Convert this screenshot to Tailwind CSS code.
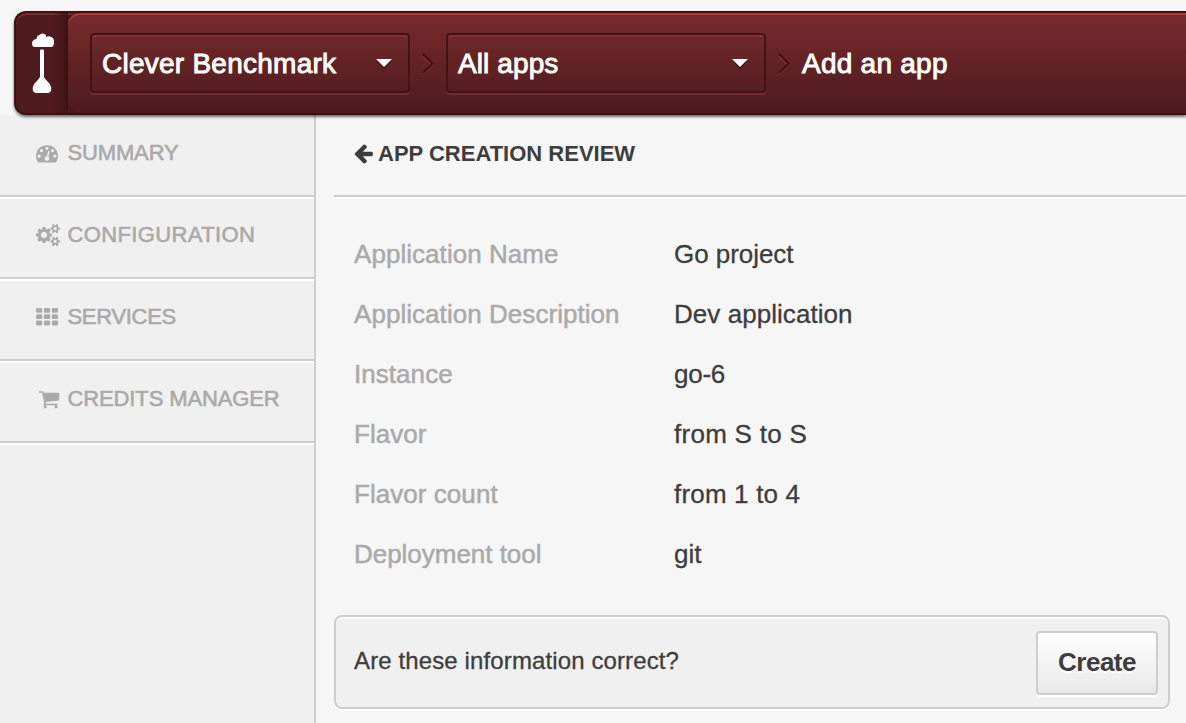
<!DOCTYPE html>
<html lang="en">
<head>
<meta charset="utf-8">
<title>App creation review</title>
<script src="https://cdn.jsdelivr.net/npm/@tailwindcss/browser@4"></script>
</head>
<body class="h-[723px] overflow-hidden bg-[#f6f6f6] font-['Liberation_Sans',Arial,sans-serif] text-[#3d3d3d]">
<div class="flex h-full flex-col">
  <div class="relative z-10 h-[115px] shrink-0 pt-[11px] pl-[14px]">
    <header class="flex h-[104px] rounded-l-[12px] border-y-2 border-l-2 border-[#3d1012] bg-[#501b1f] shadow-[inset_0_2px_0_#7d2a2e,0_2px_3px_rgba(0,0,0,0.55)]">
      <div class="flex w-[52px] shrink-0 justify-center rounded-l-[10px] bg-linear-to-r from-transparent from-70% to-[#3f1216] pt-5 pl-[2px]">
        <svg class="h-[60px] w-[22px]" viewBox="0 0 22 60" fill="#fff">
          <path d="M3 14Q0 14 0 10.500Q0 6.500 4.500 6Q4.500 2.500 7.500 2Q9 0 11.500 0.500Q14 1 14.500 4Q17 2.500 19 4Q22 4.500 22 9Q22 14 19 14Z"/>
          <path d="M8 17.500Q8 16.500 9 16.500H11Q12 16.500 12 17.500V44Q13 46 15.500 48.500Q19.500 52 19.300 56Q19 60 15.500 60H4.500Q1 60 .7 56Q.5 52 4.500 48.500Q7 46 8 44Z"/>
        </svg>
      </div>
      <div class="flex h-full grow items-start rounded-l-[12px] bg-linear-to-b from-[#782b2b] to-[#4d1a1f] pt-5 pl-[22px] text-[28px] tracking-[0.25px] text-white shadow-[inset_0_2px_0_#ab3a3a,-1px_0_3px_#3a1013]">
        <div class="flex h-[60px] w-[320px] shrink-0 items-center justify-between rounded-[4px] border-2 border-[#421316] pr-4 pl-[10px] shadow-[inset_0_2px_0_#8a2f32,0_2px_0_#792a2e]">
          <span class="pt-[2px] [-webkit-text-stroke:0.9px_white]">Clever Benchmark</span>
          <svg class="mt-[2px] h-[10px] w-4" viewBox="0 0 16 10"><path d="M0 1H16L8 10Z" fill="#3b1013"/><path d="M0 0H16L8 8Z" fill="#fff"/></svg>
        </div>
        <svg class="mx-3 mt-5 h-[22px] w-3 shrink-0" viewBox="0 0 12 22" fill="none"><path d="M1 3L10 12L1 21" stroke="#852d30" stroke-width="2"/><path d="M1 1L10.500 10.500L1 20" stroke="#3f1215" stroke-width="2.200"/></svg>
        <div class="flex h-[60px] w-[320px] shrink-0 items-center justify-between rounded-[4px] border-2 border-[#421316] pr-4 pl-[10px] shadow-[inset_0_2px_0_#8a2f32,0_2px_0_#792a2e]">
          <span class="pt-[2px] tracking-[0.1px] [-webkit-text-stroke:0.9px_white]">All apps</span>
          <svg class="mt-[2px] h-[10px] w-4" viewBox="0 0 16 10"><path d="M0 1H16L8 10Z" fill="#3b1013"/><path d="M0 0H16L8 8Z" fill="#fff"/></svg>
        </div>
        <svg class="mx-3 mt-5 h-[22px] w-3 shrink-0" viewBox="0 0 12 22" fill="none"><path d="M1 3L10 12L1 21" stroke="#852d30" stroke-width="2"/><path d="M1 1L10.500 10.500L1 20" stroke="#3f1215" stroke-width="2.200"/></svg>
        <span class="pt-px leading-[60px] [-webkit-text-stroke:0.9px_white]">Add an app</span>
      </div>
    </header>
  </div>

  <div class="flex min-h-0 grow">
    <nav class="w-[316px] shrink-0 border-r-2 border-[#cecece] bg-[#f0f0f0] text-[22px] text-[#aaa] [-webkit-text-stroke:0.6px_#aaa]">
      <a class="flex h-[82px] items-center border-b-2 border-[#cecece] pb-[5px] pl-9">
        <svg class="mr-[9.500px] h-[22px] w-[22px]" viewBox="0 0 1792 1792" fill="#aaa" stroke="none"><path d="M384 1152q0-53-37.500-90.500t-90.500-37.500-90.500 37.500-37.500 90.500 37.500 90.500 90.500 37.500 90.500-37.500 37.500-90.500zm192-448q0-53-37.500-90.500t-90.500-37.500-90.500 37.500-37.500 90.500 37.500 90.500 90.500 37.500 90.500-37.500 37.500-90.500zm428 481l101-382q6-26-7.500-48.500t-38.500-29.500-48 6.500-30 39.500l-101 382q-60 5-107 43.500t-63 98.500q-20 77 20 146t117 89 146-20 89-117q16-60-6-117t-72-91zm660-33q0-53-37.500-90.500t-90.500-37.500-90.500 37.500-37.500 90.500 37.500 90.500 90.500 37.500 90.500-37.500 37.500-90.500zm-640-640q0-53-37.500-90.500t-90.500-37.500-90.500 37.500-37.500 90.500 37.500 90.500 90.500 37.500 90.500-37.500 37.500-90.500zm448 192q0-53-37.500-90.500t-90.500-37.500-90.500 37.500-37.500 90.500 37.500 90.500 90.500 37.500 90.500-37.500 37.500-90.500zm320 448q0 261-141 483-19 29-54 29h-1402q-35 0-54-29-141-221-141-483 0-182 71-348t191-286 286-191 348-71 348 71 286 191 191 286 71 348z"/></svg>
        <span class="tracking-[-0.15px]">SUMMARY</span>
      </a>
      <a class="flex h-[82px] items-center border-b-2 border-[#cecece] pb-[5px] pl-9 shadow-[inset_0_2px_0_#fff]">
        <svg class="mr-[7.500px] h-6 w-6" viewBox="0 0 1920 1792" fill="#aaa" stroke="none"><path d="M896 896q0-106-75-181t-181-75-181 75-75 181 75 181 181 75 181-75 75-181zm768 512q0-52-38-90t-90-38-90 38-38 90q0 53 37.500 90.500t90.500 37.500 90.500-37.500 37.500-90.500zm0-1024q0-52-38-90t-90-38-90 38-38 90q0 53 37.500 90.500t90.500 37.500 90.500-37.500 37.500-90.500zm-384 421v185q0 10-7 19.500t-16 10.500l-155 24q-11 35-32 76 34 48 90 115 7 11 7 20 0 12-7 19-23 30-82.500 89.500t-78.500 59.500q-11 0-21-7l-115-90q-37 19-77 31-11 108-23 155-7 24-30 24h-186q-11 0-20-7.500t-10-17.500l-23-153q-34-10-75-31l-118 89q-7 7-20 7-11 0-21-8-144-133-144-160 0-9 7-19 10-14 41-53t47-61q-23-44-35-82l-152-24q-10-1-17-9.500t-7-19.500v-185q0-10 7-19.500t16-10.500l155-24q11-35 32-76-34-48-90-115-7-11-7-20 0-12 7-20 22-30 82-89t79-59q11 0 21 7l115 90q34-18 77-32 11-108 23-154 7-24 30-24h186q11 0 20 7.500t10 17.500l23 153q34 10 75 31l118-89q8-7 20-7 11 0 21 8 144 133 144 160 0 8-7 19-12 16-42 54t-45 60q23 48 34 82l152 23q10 2 17 10.500t7 19.500zm640 533v140q0 16-149 31-12 27-30 52 51 113 51 138 0 4-4 7-122 71-124 71-8 0-46-47t-52-68q-20 2-30 2t-30-2q-14 21-52 68t-46 47q-2 0-124-71-4-3-4-7 0-25 51-138-18-25-30-52-149-15-149-31v-140q0-16 149-31 13-29 30-52-51-113-51-138 0-4 4-7 4-2 35-20t59-34 30-16q8 0 46 46.500t52 67.500q20-2 30-2t30 2q51-71 92-112l6-2q4 0 124 70 4 3 4 7 0 25-51 138 17 23 30 52 149 15 149 31zm0-1024v140q0 16-149 31-12 27-30 52 51 113 51 138 0 4-4 7-122 71-124 71-8 0-46-47t-52-68q-20 2-30 2t-30-2q-14 21-52 68t-46 47q-2 0-124-71-4-3-4-7 0-25 51-138-18-25-30-52-149-15-149-31v-140q0-16 149-31 13-29 30-52-51-113-51-138 0-4 4-7 4-2 35-20t59-34 30-16q8 0 46 46.500t52 67.500q20-2 30-2t30 2q51-71 92-112l6-2q4 0 124 70 4 3 4 7 0 25-51 138 17 23 30 52 149 15 149 31z"/></svg>
        <span class="tracking-[0.38px]">CONFIGURATION</span>
      </a>
      <a class="flex h-[82px] items-center border-b-2 border-[#cecece] pb-[5px] pl-9 shadow-[inset_0_2px_0_#fff]">
        <svg class="mr-[9.500px] h-[18px] w-[22px]" viewBox="0 0 22 18" fill="#aaa" stroke="none"><rect width="6.200" height="4.800" rx="1.300"/><rect x="7.900" width="6.200" height="4.800" rx="1.300"/><rect x="15.800" width="6.200" height="4.800" rx="1.300"/><rect y="6.300" width="6.200" height="4.800" rx="1.300"/><rect x="7.900" y="6.300" width="6.200" height="4.800" rx="1.300"/><rect x="15.800" y="6.300" width="6.200" height="4.800" rx="1.300"/><rect y="12.600" width="6.200" height="4.800" rx="1.300"/><rect x="7.900" y="12.600" width="6.200" height="4.800" rx="1.300"/><rect x="15.800" y="12.600" width="6.200" height="4.800" rx="1.300"/></svg>
        <span class="tracking-[-0.3px]">SERVICES</span>
      </a>
      <a class="flex h-[82px] items-center border-b-2 border-[#cecece] pb-[5px] pl-[37.500px] shadow-[inset_0_2px_0_#fff]">
        <svg class="mr-2 h-[22px] w-[22px]" viewBox="0 0 1792 1792" fill="#aaa" stroke="none"><path d="M704 1536q0 52-38 90t-90 38-90-38-38-90 38-90 90-38 90 38 38 90zm896 0q0 52-38 90t-90 38-90-38-38-90 38-90 90-38 90 38 38 90zm128-1088v512q0 24-16.500 42.500t-40.500 21.500l-1044 122q13 60 13 70 0 16-24 64h920q26 0 45 19t19 45-19 45-45 19h-1024q-26 0-45-19t-19-45q0-11 8-31.500t16-36 21.500-40 15.500-29.500l-177-823h-204q-26 0-45-19t-19-45 19-45 45-19h256q16 0 28.500 6.500t19.500 15.500 13 24.500 8 26 5.500 29.500 4.500 26h1201q26 0 45 19t19 45z"/></svg>
        <span class="tracking-[-0.12px]">CREDITS MANAGER</span>
      </a>
      <div class="h-[2px] bg-white"></div>
    </nav>

    <main class="grow pl-[18px]">
      <h1 class="flex h-[82px] items-center border-b-2 border-[#cecece] pb-[3px] pl-5 text-[22px] font-bold shadow-[0_2px_0_#fff]">
        <svg class="mr-[5px] h-[22px] w-[19px]" viewBox="0 64 1548 1792" fill="#3d3d3d"><path d="M1536 896v128q0 53-32.500 90.500t-84.500 37.500h-704l293 294q38 36 38 90t-38 90l-75 76q-37 37-90 37-52 0-91-37l-651-652q-37-37-37-90 0-52 37-91l651-650q38-38 91-38 52 0 90 38l75 74q38 38 38 91t-38 91l-293 293h704q52 0 84.500 37.500t32.500 90.500z"/></svg>
        <span>APP CREATION REVIEW</span>
      </h1>
      <dl class="mt-[27px] grid grid-cols-[320px_1fr] pl-5 text-[26px] leading-[60px] tracking-[0.05px]">
        <dt class="text-[#aaa] [-webkit-text-stroke:0.5px_#aaa]">Application Name</dt><dd class="tracking-[-0.05px] [-webkit-text-stroke:0.3px_#3d3d3d]">Go project</dd>
        <dt class="text-[#aaa] [-webkit-text-stroke:0.5px_#aaa]">Application Description</dt><dd class="[-webkit-text-stroke:0.3px_#3d3d3d]">Dev application</dd>
        <dt class="text-[#aaa] [-webkit-text-stroke:0.5px_#aaa]">Instance</dt><dd class="tracking-[-0.25px] [-webkit-text-stroke:0.3px_#3d3d3d]">go-6</dd>
        <dt class="text-[#aaa] [-webkit-text-stroke:0.5px_#aaa]">Flavor</dt><dd class="tracking-[0.28px] [-webkit-text-stroke:0.3px_#3d3d3d]">from S to S</dd>
        <dt class="text-[#aaa] [-webkit-text-stroke:0.5px_#aaa]">Flavor count</dt><dd class="tracking-[0.18px] [-webkit-text-stroke:0.3px_#3d3d3d]">from 1 to 4</dd>
        <dt class="tracking-[-0.03px] text-[#aaa] [-webkit-text-stroke:0.5px_#aaa]">Deployment tool</dt><dd class="[-webkit-text-stroke:0.3px_#3d3d3d]">git</dd>
      </dl>
      <div class="mt-[31px] mr-4 flex h-[94px] items-center justify-between rounded-[8px] border-2 border-[#cecece] bg-[#f0f0f0] pr-[10px] pl-[18px] shadow-[inset_0_2px_0_#fff,0_2px_0_#fff]">
        <span class="pb-[2px] text-[24px] tracking-[0.12px] [-webkit-text-stroke:0.3px_#3d3d3d]">Are these information correct?</span>
        <button class="mt-[2px] h-16 w-[122px] rounded-[4px] border-2 border-[#cecece] bg-linear-to-b from-white to-[#e9e9e9] pb-[2px] text-[26px] font-bold tracking-[-0.5px] shadow-[0_2px_0_#fff] [text-shadow:0_2px_0_#fff]">Create</button>
      </div>
    </main>
  </div>
</div>
</body>
</html>
